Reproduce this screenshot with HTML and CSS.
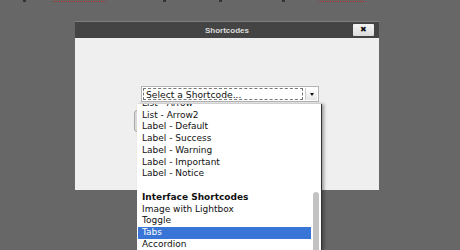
FILE: index.html
```html
<!DOCTYPE html>
<html>
  <head>
    <title>Shortcodes</title>
    <link rel="stylesheet" href="styles.css">
  </head>
  <body>
    <div class="page-strip">
      <span class="glyph g1"></span>
      <span class="typo t1"></span>
      <span class="glyph g2"></span>
      <span class="glyph g3"></span>
      <span class="glyph g4"></span>
      <span class="typo t2"></span>
    </div>

    <div class="dialog">
      <div class="dialog-title">
        <span></span>
        <h1>Shortcodes</h1>
        <button class="close">&#x2716;</button>
      </div>
      <div class="dialog-body">
        <div class="select-box">
          <span class="select-label">Select a Shortcode...</span>
          <span class="select-arrow"><i></i></span>
        </div>
        <div class="insert-btn"></div>
      </div>
    </div>

    <div class="dropdown">
      <ul class="options">
        <li>List - Arrow</li>
        <li>List - Arrow2</li>
        <li>Label - Default</li>
        <li>Label - Success</li>
        <li>Label - Warning</li>
        <li>Label - Important</li>
        <li>Label - Notice</li>
        <li class="group">Interface Shortcodes</li>
        <li>Image with Lightbox</li>
        <li>Toggle</li>
        <li class="selected">Tabs</li>
        <li>Accordion</li>
      </ul>
      <div class="scrollbar"><div class="thumb"></div></div>
    </div>
  </body>
</html>
```

FILE: styles.css
```css
body {
  margin: 0;
  background-color: #676767;
  font-family: "DejaVu Sans", Verdana, sans-serif;
  height: 250px;
  overflow: hidden;
}

/* bits of the page text peeking out above the dialog */
.page-strip {
  height: 3px;
  display: flex;
  align-items: flex-start;
}
.glyph {
  width: 3px;
  height: 2px;
  background-color: #333;
}
.typo {
  height: 0;
  border-bottom: 1px dotted #b03030;
  margin-top: 1px;
}
.g1 { margin-left: 23px; }
.t1 { margin-left: 27px; width: 53px; }
.g2 { margin-left: 57px; }
.g3 { margin-left: 53px; }
.g4 { margin-left: 60px; }
.t2 { margin-left: 33px; width: 47px; }

.dialog {
  margin: 18px 0 0 75px;
  width: 304px;
  border-top: 1px solid #7e7e7e;
}
.dialog-title {
  height: 16px;
  background-color: #444;
  display: grid;
  grid-template-columns: 1fr auto 1fr;
  align-items: center;
}
.dialog-title h1 {
  margin: 0;
  font-family: "Liberation Sans", Arial, sans-serif;
  font-size: 8px;
  font-weight: bold;
  color: #dcdcdc;
}
.close {
  justify-self: end;
  margin-right: 5px;
  width: 21px;
  height: 12px;
  padding: 0;
  border: none;
  border-radius: 1px;
  background: linear-gradient(#f4f4f4, #dcdcdc);
  color: #111;
  font-size: 8px;
  line-height: 12px;
}
.dialog-body {
  height: 152px;
  background-color: #efefef;
  padding-top: 48px;
  box-sizing: border-box;
}

.select-box {
  margin-left: 66px;
  width: 178px;
  height: 16px;
  background-color: #fff;
  border: 1px solid #b4b4b4;
  box-sizing: border-box;
  display: flex;
  padding: 1px;
}
.select-label {
  flex: 1;
  border: 1px dashed #777;
  font-size: 9.2px;
  line-height: 11px;
  padding-left: 2px;
  color: #111;
}
.select-arrow {
  width: 11px;
  margin-left: 2px;
  border-left: 1px solid #ccc;
  background: linear-gradient(#fff, #e6e6e6);
  display: flex;
  align-items: center;
  justify-content: center;
}
.select-arrow i {
  width: 0;
  height: 0;
  border-left: 2px solid transparent;
  border-right: 2px solid transparent;
  border-top: 3px solid #111;
}
.insert-btn {
  margin: 8px 0 0 59px;
  width: 40px;
  height: 20px;
  border: 1px solid #aaa;
  border-radius: 3px;
  background-color: #ddd;
}

/* open option list of the select */
.dropdown {
  position: absolute;
  left: 137px;
  top: 104px;
  width: 184px;
  height: 146px;
  background-color: #fff;
  border-right: 1px solid #333;
  box-shadow: 2px 0 3px rgba(0, 0, 0, 0.35);
  overflow: hidden;
  display: flex;
}
.options {
  list-style: none;
  margin: -6px 0 0;
  padding: 0;
  flex: 1;
  font-size: 9px;
  line-height: 11.7px;
  color: #111;
}
.options li {
  padding-left: 4px;
  margin-left: 1px;
}
.options .group {
  font-weight: bold;
  margin-top: 12px;
}
.options .selected {
  background-color: #3875d7;
  color: #fff;
}
.scrollbar {
  width: 10px;
  padding-top: 88px;
  display: flex;
  justify-content: center;
}
.thumb {
  width: 6px;
  height: 80px;
  border-radius: 3px;
  background-color: #c2c2c2;
}
```
